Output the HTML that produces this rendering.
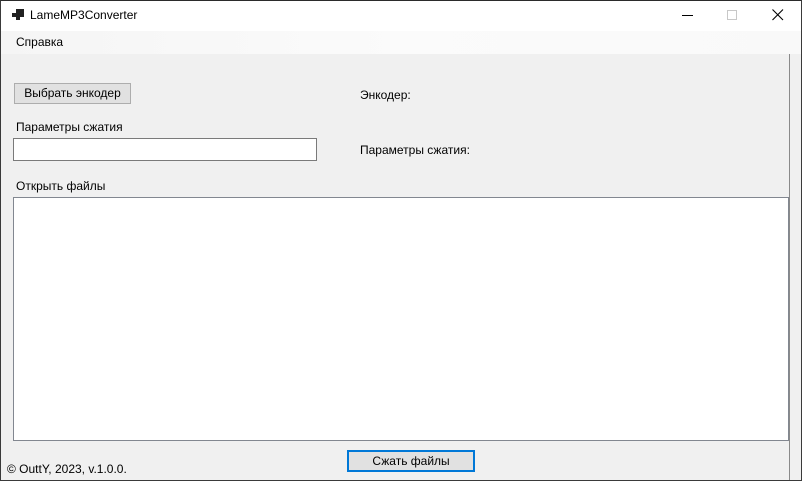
<!DOCTYPE html>
<html><head><meta charset="utf-8"><style>
*{margin:0;padding:0;box-sizing:border-box}
body{width:802px;height:481px;overflow:hidden;background:#f0f0f0;font-family:"Segoe UI","Liberation Sans",sans-serif;font-size:12px;color:#000;position:relative}
.frame{position:absolute;left:0;top:0;width:802px;height:481px;border:1px solid #3a3a3a;border-top-color:#2b2b2b}
.title{position:absolute;left:1px;top:1px;width:800px;height:30px;background:#fff}
.title span{position:absolute;left:29px;top:7px;font-size:12px}
.menu{position:absolute;left:1px;top:31px;width:800px;height:23px;background:linear-gradient(90deg,#f5f5f5,#fbfbfb 50%,#f9f9f9)}
.abs{position:absolute;white-space:nowrap}
.btn{position:absolute;background:#e1e1e1;border:1px solid #adadad;text-align:center;line-height:19px}
.tb{position:absolute;background:#fff;border:1px solid #7a7a7a}
</style></head><body>
<div class="title">
<svg style="position:absolute;left:11px;top:8px" width="12" height="12"><rect x="4" y="0" width="8" height="8" fill="#222"/><rect x="0" y="4" width="4" height="4" fill="#222"/><rect x="4" y="8" width="4" height="3" fill="#222"/></svg>
<span>LameMP3Converter</span>
<svg style="position:absolute;left:681px;top:14px" width="12" height="2"><rect width="11" height="1" fill="#000"/></svg>
<svg style="position:absolute;left:726px;top:9px" width="11" height="11"><rect x="0.5" y="0.5" width="9" height="9" fill="none" stroke="#c8c8c8"/></svg>
<svg style="position:absolute;left:771px;top:8px" width="12" height="12"><path d="M0.5 0.5L11 11M11 0.5L0.5 11" stroke="#000" stroke-width="1.1"/></svg>
</div>
<div class="menu"><span class="abs" style="left:15px;top:4px">Справка</span></div>
<div class="btn" style="left:14px;top:83px;width:117px;height:21px">Выбрать энкодер</div>
<span class="abs" style="left:360px;top:88px">Энкодер:</span>
<span class="abs" style="left:16px;top:120px">Параметры сжатия</span>
<div class="tb" style="left:13px;top:138px;width:304px;height:23px"></div>
<span class="abs" style="left:360px;top:143px">Параметры сжатия:</span>
<span class="abs" style="left:16px;top:179px">Открыть файлы</span>
<div class="tb" style="left:13px;top:197px;width:776px;height:244px;border-color:#828790"></div>
<div class="btn" style="left:347px;top:450px;width:128px;height:22px;border:2px solid #0078d7;line-height:18px">Сжать файлы</div>
<span class="abs" style="left:7px;top:462px">© OuttY, 2023, v.1.0.0.</span>
<div style="position:absolute;left:789px;top:54px;width:12px;height:426px;background:#f0f0f0;border-left:1px solid #8a8a8a"></div>
<div class="frame"></div>
</body></html>
